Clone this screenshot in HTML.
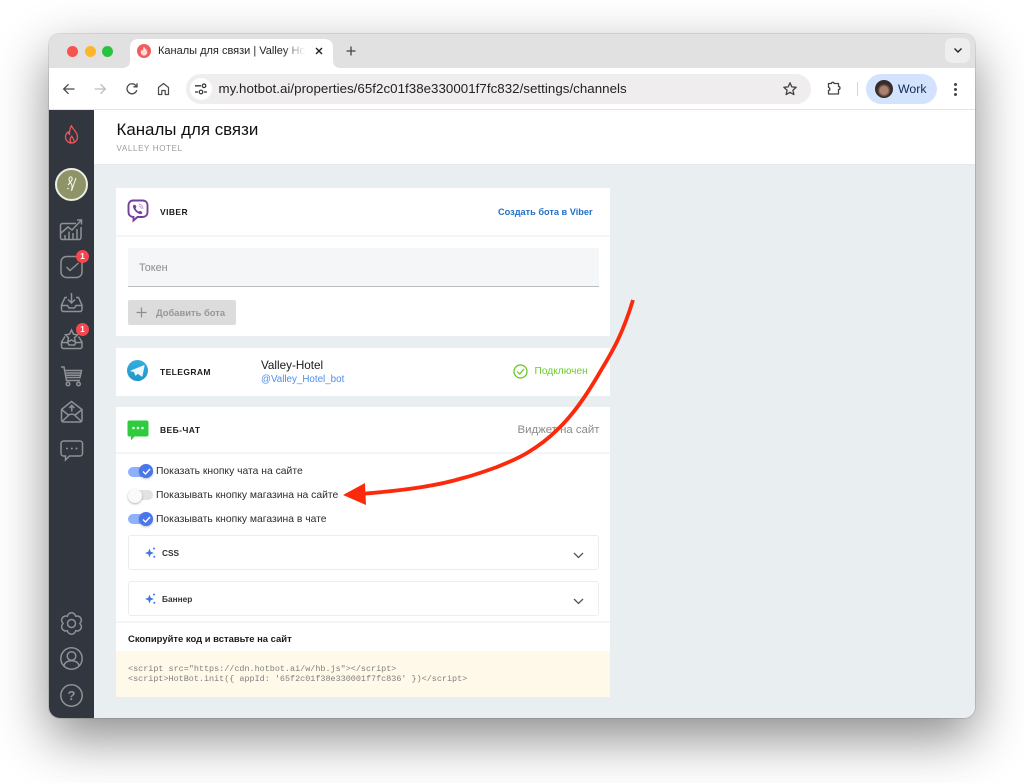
<!DOCTYPE html>
<html lang="ru">
<head>
<meta charset="utf-8">
<title>Каналы для связи | Valley Hotel</title>
<style>
html,body{margin:0;padding:0;background:#fff;width:1024px;height:783px;overflow:hidden}
body{position:relative;font-family:"Liberation Sans","Noto Sans CJK SC",sans-serif;color:#111}
.a{position:absolute}
.t{position:absolute;white-space:nowrap;line-height:1}
svg{position:absolute;overflow:visible}
#shadow{position:absolute;left:49px;top:34px;width:926px;height:684px;border-radius:11px;box-shadow:0 0 0 1px rgba(0,0,0,.1),0 20px 52px rgba(0,0,0,.46)}
.card{position:absolute;left:116px;width:494px;background:#fff}
.line{position:absolute;height:2px;background:#f3f5f6}
.chan{font-size:8.5px;font-weight:bold;letter-spacing:.4px;color:#1c1c1c}
.lbl{font-size:10.35px;color:#2b2b2b}
.trk{position:absolute;left:128px;width:25px;height:10px;border-radius:5px;background:#8fb0fb}
.knob{position:absolute;left:139px;width:14px;height:14px;border-radius:50%;background:#4a76ec;box-shadow:0 1px 2px rgba(0,0,0,.25)}
.acc{position:absolute;left:128px;width:469px;height:33px;border:1px solid #e9edef;border-radius:3px;background:#fff}
</style>
</head>
<body>
<div id="shadow"></div>

<!-- Chrome tab strip + toolbar -->
<div class="a" style="left:49px;top:34px;width:926px;height:34px;background:#e1e1e1;border-radius:11px 11px 0 0"></div>
<div class="a" style="left:49px;top:68px;width:926px;height:41px;background:#fff"></div>
<div class="a" style="left:49px;top:109px;width:926px;height:1px;background:#e4e4e4"></div>

<div class="a" style="left:67px;top:46px;width:11px;height:11px;border-radius:50%;background:#f7544e"></div>
<div class="a" style="left:85px;top:46px;width:11px;height:11px;border-radius:50%;background:#fcb62e"></div>
<div class="a" style="left:102px;top:46px;width:11px;height:11px;border-radius:50%;background:#27c53f"></div>

<!-- Active tab -->
<svg style="left:122px;top:38px" width="220" height="31" viewBox="0 0 220 31"><path d="M0 30C6 30 8 27 8 22V10C8 4 11 1 17 1H202C208 1 211 4 211 10V22C211 27 213 30 219 30V31H0Z" fill="#fff"/></svg>
<div class="a" style="left:137px;top:44px;width:14px;height:14px;border-radius:50%;background:#f25c5e"></div>
<svg style="left:140px;top:46px" width="8" height="10" viewBox="0 0 8 10"><path d="M4 .5C4.500 2.500 7.300 3.500 7.300 6.300A3.300 3.300 0 0 1 .7 6.300C.7 5 1.500 4 2.200 3.500 2.300 4.300 2.700 4.700 3 4.800 3 3 3.300 1.500 4 .5Z" fill="#ffd9d5"/></svg>
<div class="t" style="left:158px;top:46px;font-size:11px;color:#222;width:147px;overflow:hidden;-webkit-mask-image:linear-gradient(90deg,#000 125px,transparent 147px)">Каналы для связи | Valley Hotel</div>
<svg style="left:314px;top:46px" width="10" height="10" viewBox="0 0 10 10"><path d="M2 2L8 8M8 2L2 8" stroke="#222" stroke-width="1.400" fill="none"/></svg>
<svg style="left:345px;top:45px" width="12" height="12" viewBox="0 0 12 12"><path d="M6 1.500V10.500M1.500 6H10.500" stroke="#444" stroke-width="1.300" fill="none"/></svg>
<div class="a" style="left:945px;top:38px;width:25px;height:25px;border-radius:7px;background:#eeeeee"></div>
<svg style="left:953px;top:47px" width="10" height="7" viewBox="0 0 10 7"><path d="M1.500 1.500L5 5L8.500 1.500" stroke="#222" stroke-width="1.400" fill="none"/></svg>

<!-- Toolbar icons -->
<svg style="left:62px;top:82px" width="14" height="14" viewBox="0 0 14 14"><path d="M12.500 7H2M6.500 2.200L1.700 7L6.500 11.800" stroke="#4a4a4a" stroke-width="1.300" fill="none"/></svg>
<svg style="left:93px;top:82px" width="14" height="14" viewBox="0 0 14 14"><path d="M1.500 7H12M7.500 2.200L12.300 7L7.500 11.800" stroke="#bdbdbd" stroke-width="1.300" fill="none"/></svg>
<svg style="left:125px;top:82px" width="14" height="14" viewBox="0 0 14 14"><path d="M11.800 8.200A5 5 0 1 1 10.600 3.300L12 4.800M12 1.200V4.800H8.400" stroke="#4a4a4a" stroke-width="1.300" fill="none"/></svg>
<svg style="left:157px;top:82px" width="13" height="14" viewBox="0 0 13 14"><path d="M1.500 12.500V5.500L6.500 1.500L11.500 5.500V12.500H8.200V8.500H4.800V12.500Z" stroke="#4a4a4a" stroke-width="1.200" fill="none" stroke-linejoin="round"/></svg>

<div class="a" style="left:186px;top:74px;width:625px;height:30px;border-radius:15px;background:#efedee"></div>
<div class="a" style="left:190px;top:78px;width:22px;height:22px;border-radius:50%;background:#fff"></div>
<svg style="left:194px;top:83px" width="14" height="12" viewBox="0 0 14 12"><path d="M1 2.800H7M1 9H4M10 9H13" stroke="#333" stroke-width="1.300" fill="none"/><circle cx="10" cy="2.800" r="1.800" stroke="#333" stroke-width="1.200" fill="none"/><circle cx="7" cy="9" r="1.800" stroke="#333" stroke-width="1.200" fill="none"/></svg>
<div class="t" style="left:218.500px;top:81.500px;font-size:13.300px;color:#222;letter-spacing:.04px">my.hotbot.ai/properties/65f2c01f38e330001f7fc832/settings/channels</div>
<svg style="left:782px;top:81px" width="16" height="16" viewBox="0 0 16 16"><path d="M8 1.800L9.800 5.900L14.200 6.300L10.900 9.200L11.900 13.600L8 11.300L4.100 13.600L5.100 9.200L1.800 6.300L6.200 5.900Z" stroke="#444" stroke-width="1.300" fill="none" stroke-linejoin="round"/></svg>
<svg style="left:826px;top:80px" width="16" height="16" viewBox="0 0 16 16"><path d="M2.500 3.500H5.500C5.500 1.800 8 1.800 8 3.500H12.500V6.500C14.500 6.500 14.500 9.500 12.500 9.500V14H2.500V10.500C4.300 10.500 4.300 7.500 2.500 7.500Z" stroke="#444" stroke-width="1.300" fill="none" stroke-linejoin="round"/></svg>
<div class="a" style="left:857px;top:82px;width:1px;height:14px;background:#d5d5d5"></div>
<div class="a" style="left:866px;top:74px;width:71px;height:30px;border-radius:15px;background:#d3e3fd"></div>
<div class="a" style="left:875px;top:80px;width:18px;height:18px;border-radius:50%;background:radial-gradient(circle at 50% 58%,#a9816e 0 28%,#3a2c28 48%,#2a2a2a 100%)"></div>
<div class="t" style="left:898px;top:82.500px;font-size:12.300px;color:#0f2a54">Work</div>
<div class="a" style="left:954px;top:82.500px;width:3px;height:3px;border-radius:50%;background:#444"></div>
<div class="a" style="left:954px;top:87.500px;width:3px;height:3px;border-radius:50%;background:#444"></div>
<div class="a" style="left:954px;top:92.500px;width:3px;height:3px;border-radius:50%;background:#444"></div>

<!-- App shell -->
<div class="a" style="left:94px;top:110px;width:881px;height:608px;background:#e9eff1;border-radius:0 0 11px 0"></div>
<div class="a" style="left:94px;top:110px;width:881px;height:55px;background:#fff;border-bottom:1px solid #e6eaec;box-sizing:border-box"></div>
<div class="a" style="left:49px;top:110px;width:45px;height:608px;background:#32363f;border-radius:0 0 0 11px"></div>
<div class="t" style="left:116.500px;top:122px;font-size:16.900px;color:#111">Каналы для связи</div>
<div class="t" style="left:116.500px;top:145px;font-size:8px;letter-spacing:.65px;color:#9b9b9b">VALLEY HOTEL</div>

<!-- Sidebar -->
<svg style="left:63px;top:124px" width="17" height="21" viewBox="0 0 17 21"><path d="M8.500 1.500C9 5 14.500 7.500 14.500 13A6 6 0 0 1 2.500 13C2.500 10.500 4 8.800 5.200 7.800 5.300 9.300 5.800 10 6.500 10.500 6.500 7 7 4 8.500 1.500ZM8.500 19C6.500 17 6.800 14.500 8.800 12 9.300 14 11.500 15 10.800 17.500" stroke="#e8565a" stroke-width="1.300" fill="none" stroke-linejoin="round"/></svg>
<div class="a" style="left:55px;top:168px;width:33px;height:33px;box-sizing:border-box;border-radius:50%;background:#8f9368;border:2px solid #eceee0"></div>
<svg style="left:63px;top:174px" width="17" height="21" viewBox="0 0 17 21"><path d="M7 3C5 5 6.500 8 8 9.500 9.500 11 9.500 13 8.500 17L13 4M7 3C9 2 10 5 8 7.500L5 11" stroke="#f3f3ea" stroke-width="1.100" fill="none"/><circle cx="5" cy="14.500" r=".8" fill="#f3f3ea"/></svg>

<svg style="left:59px;top:218px" width="25" height="23" viewBox="0 0 25 23" fill="none" stroke="#8e9196" stroke-width="1.500"><path d="M17 5.500H3.500A2 2 0 0 0 1.500 7.500V19.500A2 2 0 0 0 3.500 21.500H20A2 2 0 0 0 22 19.500V9"/><path d="M2 15L9 9L13 12L22.500 2M18 2H22.500V6.500"/><path d="M6 21V17M10 21V13.500M14 21V15M18 21V11"/></svg>
<svg style="left:60px;top:255px" width="24" height="24" viewBox="0 0 24 24" fill="none" stroke="#8e9196" stroke-width="1.500"><rect x="1" y="1.500" width="21" height="21" rx="5.500"/><path d="M6.500 12L10 15.500L18.500 8"/></svg>
<div class="a" style="left:76px;top:250px;width:13px;height:13px;border-radius:50%;background:#f4474f"></div>
<div class="t" style="left:76px;top:252.500px;width:13px;text-align:center;font-size:8px;font-weight:bold;color:#fff">1</div>
<svg style="left:60px;top:292px" width="24" height="21" viewBox="0 0 24 21" fill="none" stroke="#8e9196" stroke-width="1.500"><path d="M11.500 1V10.500M8 7.500L11.500 11L15 7.500"/><path d="M7 5.500H5L1.500 13V17.500A2 2 0 0 0 3.500 19.500H20A2 2 0 0 0 22 17.500V13L18.500 5.500H16M1.500 13.500H7.500L9 16H14.500L16 13.500H22"/></svg>
<svg style="left:60px;top:328px" width="24" height="22" viewBox="0 0 24 22" fill="none" stroke="#8e9196" stroke-width="1.500"><path d="M11.500 2L13.500 6.200L17.500 6.800L14.500 9.700L15.300 14L11.500 12L7.700 14L8.500 9.700L5.500 6.800L9.500 6.200Z"/><path d="M5 8.500L1.500 14V18.500A2 2 0 0 0 3.500 20.500H20A2 2 0 0 0 22 18.500V14L18.500 8.500M1.500 14.500H7.500L9 17H14.500L16 14.500H22"/></svg>
<div class="a" style="left:76px;top:323px;width:13px;height:13px;border-radius:50%;background:#f4474f"></div>
<div class="t" style="left:76px;top:325.500px;width:13px;text-align:center;font-size:8px;font-weight:bold;color:#fff">1</div>
<svg style="left:60px;top:366px" width="23" height="21" viewBox="0 0 23 21" fill="none" stroke="#8e9196" stroke-width="1.500"><path d="M1 1H4L6.500 14.500H20M5 4.500H21.500L20 11.500H6"/><path d="M6 7H20.500M6 9.300H20"/><circle cx="8" cy="18" r="1.800"/><circle cx="18.500" cy="18" r="1.800"/></svg>
<svg style="left:60px;top:400px" width="24" height="23" viewBox="0 0 24 23" fill="none" stroke="#8e9196" stroke-width="1.500"><path d="M1.500 9.500L11.500 1.500L22 9.500V20A2 2 0 0 1 20 22H3.500A2 2 0 0 1 1.500 20Z"/><path d="M1.500 9.500L9 15.500M22 9.500L14.500 15.500M2 21.500L9 15C10.500 13.800 13 13.800 14.500 15L21.500 21.500"/><path d="M11.800 11.500V5.500M9.200 8L11.800 5.300L14.400 8"/></svg>
<svg style="left:60px;top:440px" width="24" height="21" viewBox="0 0 24 21" fill="none" stroke="#8e9196" stroke-width="1.500"><path d="M3.500 1H20A2.500 2.500 0 0 1 22.500 3.500V13.500A2.500 2.500 0 0 1 20 16H9.500L5.500 20V16H3.500A2.500 2.500 0 0 1 1 13.500V3.500A2.500 2.500 0 0 1 3.500 1Z"/><circle cx="7" cy="8.500" r="1" fill="#8e9196" stroke="none"/><circle cx="11.800" cy="8.500" r="1" fill="#8e9196" stroke="none"/><circle cx="16.500" cy="8.500" r="1" fill="#8e9196" stroke="none"/></svg>

<svg style="left:60px;top:612px" width="23" height="23" viewBox="0 0 23 23" fill="none" stroke="#8e9196" stroke-width="1.500"><path d="M7.350 4.310A4.200 4.200 0 0 1 15.650 4.310A4.200 4.200 0 0 1 19.800 11.500A4.200 4.200 0 0 1 15.650 18.690A4.200 4.200 0 0 1 7.350 18.690A4.200 4.200 0 0 1 3.200 11.500A4.200 4.200 0 0 1 7.350 4.310Z" stroke-linejoin="round"/><circle cx="11.500" cy="11.500" r="4"/></svg>
<svg style="left:60px;top:647px" width="23" height="23" viewBox="0 0 23 23" fill="none" stroke="#8e9196" stroke-width="1.500"><circle cx="11.500" cy="11.500" r="10.700"/><circle cx="11.500" cy="9" r="4.300"/><path d="M4 18.500C5 15 8 13.800 11.500 13.800S18 15 19 18.500"/></svg>
<svg style="left:60px;top:684px" width="23" height="23" viewBox="0 0 23 23" fill="none" stroke="#8e9196" stroke-width="1.500"><circle cx="11.500" cy="11.500" r="10.700"/></svg>
<div class="t" style="left:60px;top:689px;width:23px;text-align:center;font-size:13px;font-weight:bold;color:#8e9196">?</div>

<!-- Viber card -->
<div class="card" style="top:188px;height:148px"></div>
<div class="line" style="left:116px;top:235px;width:494px"></div>
<svg style="left:127px;top:199px" width="22" height="24" viewBox="0 0 22 24" fill="none"><path d="M6 1.500H15.500C18.500 1.500 20.500 3.500 20.500 6.500V13C20.500 16 18.500 18 15.500 18H10.500L6.500 21.500V18C3.500 17.800 1.500 16 1.500 13V6.500C1.500 3.500 3.500 1.500 6 1.500Z" stroke="#74409c" stroke-width="1.900"/><path d="M6.800 5.800C8 5 8.800 6.500 9.300 7.500 9.700 8.300 8.500 8.800 8.700 9.500 9.200 10.800 10.300 12 11.500 12.500 12.300 12.800 12.800 11.500 13.500 12 14.500 12.600 16 13.500 15 14.500 14 15.500 12.500 15.200 11 14.300 8.700 13 7 11 6.200 8.700 5.800 7.500 6 6.500 6.800 5.800Z" fill="#74409c"/><path d="M11.500 5C14 5 16 7 16 10M11.800 7C13.200 7 14.300 8.200 14.300 9.700" stroke="#b79ccb" stroke-width=".9"/></svg>
<div class="t chan" style="left:160px;top:208px">VIBER</div>
<div class="t" style="left:498px;top:207.500px;font-size:9.200px;font-weight:bold;color:#2271c6">Создать бота в Viber</div>
<div class="a" style="left:128px;top:248px;width:471px;height:39px;box-sizing:border-box;background:#f5f6f7;border-bottom:1px solid #b8bcc0"></div>
<div class="t" style="left:139px;top:263px;font-size:10.800px;color:#8b8b8b">Токен</div>
<div class="a" style="left:128px;top:300px;width:108px;height:25px;background:#dcdcdc;border-radius:2px"></div>
<svg style="left:136px;top:307px" width="11" height="11" viewBox="0 0 11 11"><path d="M5.500 .5V10.500M.5 5.500H10.500" stroke="#8d8d8d" stroke-width="1.200" fill="none"/></svg>
<div class="t" style="left:156px;top:308px;font-size:9.400px;font-weight:bold;color:#979797">Добавить бота</div>

<!-- Telegram card -->
<div class="card" style="top:348px;height:48px"></div>
<div class="a" style="left:127px;top:360px;width:21px;height:21px;border-radius:50%;background:linear-gradient(180deg,#37aee2,#1e96c8)"></div>
<svg style="left:130px;top:364px" width="15" height="14" viewBox="0 0 15 14"><path d="M.8 6.500L13.800 1.200C14.300 1 14.600 1.400 14.500 2L12.500 12C12.400 12.600 11.800 12.700 11.400 12.400L7.800 9.700 6 11.500C5.600 11.800 5.300 11.700 5.200 11.300L4 8 .8 7.200C.4 7 .4 6.700.8 6.500Z" fill="#eef7fb"/></svg>
<div class="t chan" style="left:160px;top:368px">TELEGRAM</div>
<div class="t" style="left:261px;top:360px;font-size:11.700px;color:#1a1a1a">Valley-Hotel</div>
<div class="t" style="left:261px;top:374.500px;font-size:9.800px;color:#4b8df0">@Valley_Hotel_bot</div>
<svg style="left:513px;top:364px" width="15" height="15" viewBox="0 0 15 15" fill="none" stroke="#63c51c" stroke-width="1.200"><circle cx="7.500" cy="7.500" r="6.500"/><path d="M4.200 7.500L6.700 10L11 5"/></svg>
<div class="t" style="left:534.500px;top:366.500px;font-size:10.200px;color:#6ccb2b">Подключен</div>

<!-- Web chat card -->
<div class="card" style="top:407px;height:290px"></div>
<div class="line" style="left:116px;top:452px;width:494px"></div>
<svg style="left:127px;top:420px" width="22" height="21" viewBox="0 0 22 21"><path d="M2.500 .5H19.500A2 2 0 0 1 21.500 2.500V14.500A2 2 0 0 1 19.500 16.500H7.500L4 20.500V16.500H2.500A2 2 0 0 1 .5 14.500V2.500A2 2 0 0 1 2.500 .5Z" fill="#2ecb3e"/><circle cx="6.500" cy="8" r="1.300" fill="#e6ffe6"/><circle cx="11" cy="8" r="1.300" fill="#e6ffe6"/><circle cx="15.500" cy="8" r="1.300" fill="#e6ffe6"/></svg>
<div class="t chan" style="left:160px;top:426px">ВЕБ-ЧАТ</div>
<div class="t" style="left:517.500px;top:425px;font-size:11.400px;color:#8a8a8a">Виджет на сайт</div>

<div class="trk" style="top:466.500px"></div>
<div class="knob" style="top:464px"></div>
<svg style="left:141.500px;top:466.500px" width="9" height="9" viewBox="0 0 9 9"><path d="M1 4.500L3.500 7L8 2" stroke="#fff" stroke-width="1.400" fill="none"/></svg>
<div class="t lbl" style="left:156px;top:467px">Показать кнопку чата на сайте</div>

<div class="a" style="left:128px;top:490px;width:25px;height:10px;border-radius:5px;background:#e2e2e2"></div>
<div class="a" style="left:128px;top:489px;width:14px;height:14px;border-radius:50%;background:#fafafa;box-shadow:0 1px 2px rgba(0,0,0,.3)"></div>
<div class="t lbl" style="left:156px;top:491px">Показывать кнопку магазина на сайте</div>

<div class="trk" style="top:514px"></div>
<div class="knob" style="top:512px"></div>
<svg style="left:141.500px;top:514.500px" width="9" height="9" viewBox="0 0 9 9"><path d="M1 4.500L3.500 7L8 2" stroke="#fff" stroke-width="1.400" fill="none"/></svg>
<div class="t lbl" style="left:156px;top:514.500px">Показывать кнопку магазина в чате</div>

<div class="acc" style="top:535px"></div>
<svg style="left:145px;top:547px" width="11" height="11" viewBox="0 0 11 11"><path d="M4.500 1.500L5.700 4.800 9 6 5.700 7.200 4.500 10.500 3.300 7.200 0 6 3.300 4.800Z" fill="#3c78e8"/><circle cx="9" cy="1.500" r="1" fill="#3c78e8"/><circle cx="9.300" cy="9.800" r="1" fill="#3c78e8"/></svg>
<div class="t" style="left:162px;top:548.500px;font-size:8.300px;font-weight:bold;color:#333">CSS</div>
<svg style="left:573px;top:552px" width="11" height="7" viewBox="0 0 11 7"><path d="M1 1L5.500 5.500L10 1" stroke="#555" stroke-width="1.300" fill="none"/></svg>

<div class="acc" style="top:581px"></div>
<svg style="left:145px;top:593px" width="11" height="11" viewBox="0 0 11 11"><path d="M4.500 1.500L5.700 4.800 9 6 5.700 7.200 4.500 10.500 3.300 7.200 0 6 3.300 4.800Z" fill="#3c78e8"/><circle cx="9" cy="1.500" r="1" fill="#3c78e8"/><circle cx="9.300" cy="9.800" r="1" fill="#3c78e8"/></svg>
<div class="t" style="left:162px;top:594.500px;font-size:8.300px;font-weight:bold;color:#333">Баннер</div>
<svg style="left:573px;top:598px" width="11" height="7" viewBox="0 0 11 7"><path d="M1 1L5.500 5.500L10 1" stroke="#555" stroke-width="1.300" fill="none"/></svg>

<div class="line" style="left:116px;top:621px;width:494px"></div>
<div class="t" style="left:128px;top:634.500px;font-size:9.450px;font-weight:bold;color:#1a1a1a">Скопируйте код и вставьте на сайт</div>
<div class="a" style="left:116px;top:651px;width:494px;height:46px;background:#fff9e9"></div>
<div class="t" style="left:128px;top:664px;font-family:'Liberation Mono',monospace;font-size:8.450px;line-height:10px;color:#7f7f7f;white-space:pre">&lt;script src="https://cdn.hotbot.ai/w/hb.js"&gt;&lt;/script&gt;
&lt;script&gt;HotBot.init({ appId: '65f2c01f38e330001f7fc836' })&lt;/script&gt;</div>

<!-- Red arrow -->
<svg style="left:0;top:0" width="1024" height="783" viewBox="0 0 1024 783"><path d="M633 300C622 336 612 352 600 372C585 398 572 416 557 430C547 440 537 447 527 453C517 459 507 463 497 467C486 471 475 475 463 478C440 485 410 490 360 494" stroke="#fb2a0c" stroke-width="3.800" fill="none"/><path d="M343 495L365 483L366 505Z" fill="#fb2a0c"/></svg>
</body>
</html>
